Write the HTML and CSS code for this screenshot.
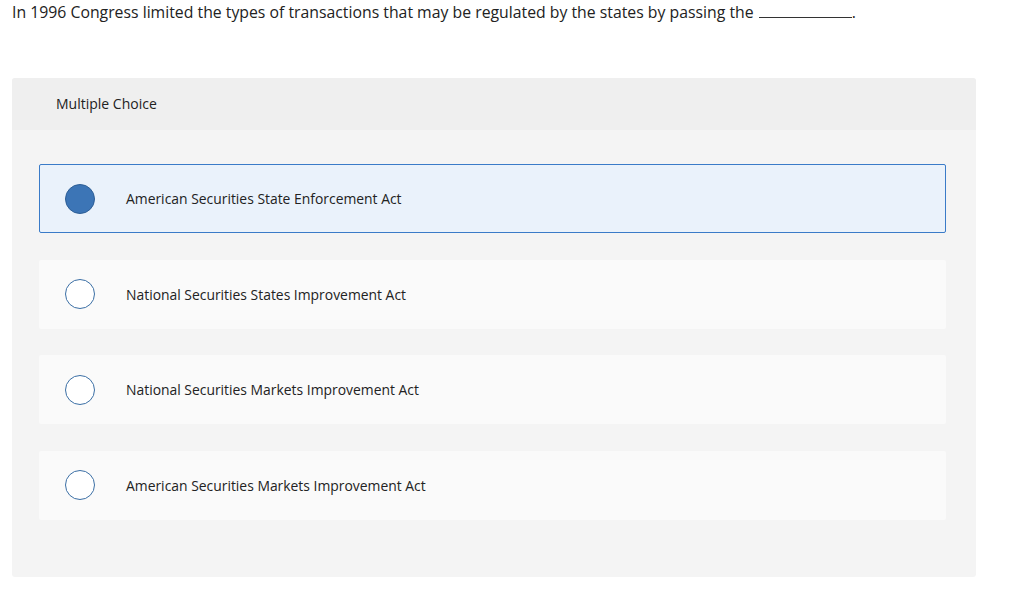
FILE: index.html
```html
<!DOCTYPE html>
<html>
<head>
  <title>Multiple Choice</title>
  <meta http-equiv="content-type" content="text/html; charset=utf-8" />
  <link rel="stylesheet" href="styles.css">
</head>
<body>
  <p class="question">In 1996 Congress limited the types of transactions that may be regulated by the states by passing the <span class="blank"></span>.</p>

  <div class="panel">
    <div class="panel-head">Multiple Choice</div>
    <div class="panel-body">
      <div class="choice selected">
        <span class="radio"></span>
        <span class="label">American Securities State Enforcement Act</span>
      </div>
      <div class="choice">
        <span class="radio"></span>
        <span class="label">National Securities States Improvement Act</span>
      </div>
      <div class="choice">
        <span class="radio"></span>
        <span class="label">National Securities Markets Improvement Act</span>
      </div>
      <div class="choice">
        <span class="radio"></span>
        <span class="label">American Securities Markets Improvement Act</span>
      </div>
    </div>
  </div>
</body>
</html>
```

FILE: styles.css
```css
body {
  margin: 0;
  padding: 3px 12px 0 12px;
  font-family: "Open Sans", "Liberation Sans", sans-serif;
  color: #222;
  background: #fff;
}
.question {
  margin: 0;
  font-size: 15.8px;
  line-height: 19px;
}
.blank {
  display: inline-block;
  width: 93px;
  border-bottom: 1px solid #333;
  margin-left: 1px;
}
.panel {
  margin-top: 56px;
  width: 964px;
  background: #f4f4f4;
  border-radius: 3px;
  overflow: hidden;
}
.panel-head {
  height: 52px;
  line-height: 52px;
  padding-left: 44px;
  background: #efefef;
  font-size: 14px;
}
.panel-body {
  padding: 34px 30px 57px 27px;
  display: flex;
  flex-direction: column;
  gap: 26.5px;
}
.choice {
  height: 67px;
  border: 1px solid transparent;
  border-radius: 2px;
  background: #fafafa;
  display: flex;
  align-items: center;
  padding-left: 25px;
  font-size: 13.9px;
}
.choice.selected {
  background: #eaf2fb;
  border-color: #3a7bc8;
}
.radio {
  width: 28px;
  height: 28px;
  border: 1px solid #3b6fa5;
  border-radius: 50%;
  background: #fff;
  margin-right: 31px;
  flex: none;
}
.selected .radio {
  background: #3c75b6;
  border-color: #2e5f96;
}
```
